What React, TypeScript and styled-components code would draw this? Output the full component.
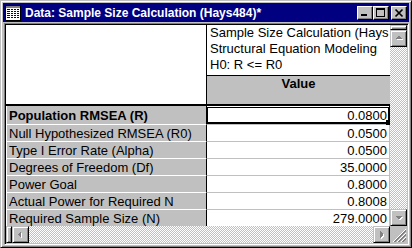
import * as React from 'react';
import styled, { createGlobalStyle } from 'styled-components';

const GlobalStyle = createGlobalStyle`
	html, body {
		margin: 0;
		padding: 0;
		background: #c0c0c0;
	}
	body {
		font-family: 'Liberation Sans', Arial, sans-serif;
	}
`;

const Window = styled.div`
	width: 412px;
	height: 248px;
	box-sizing: border-box;
	background: #c0c0c0;
	border: 1px solid;
	border-color: #c0c0c0 #000 #000 #c0c0c0;
	box-shadow: inset 1px 1px 0 #fff, inset -1px -1px 0 #808080;
	padding: 2px;
	display: flex;
	flex-direction: column;
`;

const TitleBar = styled.div`
	height: 19px;
	flex: none;
	background: #000080;
	display: flex;
	align-items: center;
	padding: 0 2px;
	box-sizing: border-box;
`;

const TitleText = styled.div`
	flex: 1;
	margin-left: 4px;
	color: #fff;
	font-weight: bold;
	font-size: 12px;
	white-space: nowrap;
	overflow: hidden;
`;

const CaptionButton = styled.div<{ $gap?: number }>`
	width: 16px;
	height: 14px;
	box-sizing: border-box;
	background: #c0c0c0;
	border: 1px solid;
	border-color: #fff #000 #000 #fff;
	box-shadow: inset -1px -1px 0 #808080;
	margin-left: ${(p) => p.$gap ?? 0}px;
	display: flex;
	svg {
		display: block;
	}
`;

const Client = styled.div`
	flex: 1;
	margin: 1px 0 0 1px;
	border: 1px solid;
	border-color: #808080 #fff #fff #808080;
	padding: 1px;
	box-shadow: inset 1px 1px 0 #000, inset -1px -1px 0 #c0c0c0;
	display: grid;
	grid-template-columns: 1fr 17px;
	grid-template-rows: 1fr 17px;
	min-height: 0;
`;

const Table = styled.div`
	display: flex;
	flex-direction: column;
	overflow: hidden;
	background: #fff;
	font-size: 13px;
	color: #000;
`;

const HeaderRow = styled.div`
	display: grid;
	grid-template-columns: 200px 184px;
	height: 81px;
	flex: none;
`;

const Corner = styled.div`
	background: #fff;
	border-bottom: 2px solid #000;
`;

const ColumnHeader = styled.div`
	border-left: 1px solid #000;
	display: flex;
	flex-direction: column;
`;

const ColumnTitle = styled.div`
	height: 50px;
	border-bottom: 1px solid #000;
	padding-left: 3px;
	line-height: 16px;
	overflow: hidden;
	white-space: nowrap;
`;

const ColumnName = styled.div`
	flex: 1;
	background: #c0c0c0;
	border-bottom: 2px solid #000;
	font-weight: bold;
	text-align: center;
	line-height: 15px;
`;

const Row = styled.div<{ $height: number }>`
	display: grid;
	grid-template-columns: 200px 184px;
	height: ${(p) => p.$height}px;
	flex: none;
`;

const RowHeader = styled.div<{ $first?: boolean; $bold?: boolean }>`
	background: #c0c0c0;
	border-left: 1px solid #fff;
	border-top: ${(p) => (p.$first ? 'none' : '1px solid #fff')};
	padding-left: 2px;
	font-weight: ${(p) => (p.$bold ? 'bold' : 'normal')};
	display: flex;
	align-items: center;
	white-space: nowrap;
	overflow: hidden;
`;

const ValueCell = styled.div<{ $first?: boolean; $selected?: boolean }>`
	position: relative;
	background: #fff;
	border-left: 1px solid #000;
	border-right: 1px solid ${(p) => (p.$selected ? '#000' : '#c0c0c0')};
	border-top: ${(p) => (p.$first ? 'none' : '1px solid #c0c0c0')};
	padding-right: 2px;
	display: flex;
	align-items: center;
	justify-content: flex-end;
	white-space: nowrap;
`;

const Selection = styled.div`
	position: absolute;
	top: 1px;
	left: 0;
	right: 0;
	bottom: 0;
	border: 1px solid #000;
	border-bottom-width: 2px;
	pointer-events: none;
`;

const FillHandle = styled.div`
	position: absolute;
	right: -2px;
	bottom: -3px;
	width: 4px;
	height: 5px;
	background: #000;
	z-index: 1;
`;

const ScrollBar = styled.div<{ $vertical?: boolean }>`
	display: flex;
	flex-direction: ${(p) => (p.$vertical ? 'column' : 'row')};
	background: #c0c0c0;
`;

const Raised = styled.div<{ $w: number; $h: number }>`
	width: ${(p) => p.$w}px;
	height: ${(p) => p.$h}px;
	flex: none;
	box-sizing: border-box;
	background: #c0c0c0;
	border: 1px solid;
	border-color: #c0c0c0 #000 #000 #c0c0c0;
	box-shadow: inset 1px 1px 0 #fff, inset -1px -1px 0 #808080;
	display: flex;
	align-items: center;
	justify-content: center;
	svg {
		display: block;
	}
`;

const Track = styled.div`
	flex: 1;
	background-color: #c0c0c0;
	background-image: conic-gradient(#fff 25%, #c0c0c0 0 50%, #fff 0 75%, #c0c0c0 0);
	background-size: 2px 2px;
`;

const Grip = styled.div`
	background: #c0c0c0;
	svg {
		display: block;
	}
`;

type Dir = 'up' | 'down' | 'left' | 'right';

const arrowPoints: Record<Dir, string> = {
	up: '7,5 4,8 11,8 8,5',
	down: '4,6 11,6 8,9 7,9',
	left: '5,7 8,4 8,11 5,8',
	right: '6,4 9,7 9,8 6,11',
};

function Arrow({ dir }: { dir: Dir }) {
	const pts = arrowPoints[dir];
	return (
		<svg width="15" height="15" viewBox="0 0 15 15" shapeRendering="crispEdges">
			<polygon points={pts} fill="#fff" transform="translate(1 1)" />
			<polygon points={pts} fill="#808080" />
		</svg>
	);
}

function SheetIcon() {
	const rows = [0, 1, 2, 3, 4];
	const cols = [2, 6, 9, 12];
	return (
		<svg width="16" height="16" viewBox="0 0 16 16" shapeRendering="crispEdges">
			<rect x="0.5" y="0.5" width="15" height="15" fill="#fff" stroke="#000" />
			<rect x="1" y="1" width="14" height="2" fill="#808080" />
			{rows.map((r) =>
				cols.map((c) => (
					<rect key={`${r}-${c}`} x={c} y={4 + r * 2} width={c === 2 ? 3 : 2} height="1" fill="#000080" />
				)),
			)}
		</svg>
	);
}

const rows = [
	{ label: 'Population RMSEA (R)', value: '0.0800' },
	{ label: 'Null Hypothesized RMSEA (R0)', value: '0.0500' },
	{ label: 'Type I Error Rate (Alpha)', value: '0.0500' },
	{ label: 'Degrees of Freedom (Df)', value: '35.0000' },
	{ label: 'Power Goal', value: '0.8000' },
	{ label: 'Actual Power for Required N', value: '0.8008' },
	{ label: 'Required Sample Size (N)', value: '279.0000' },
];

export default function App() {
	return (
		<>
			<GlobalStyle />
			<Window>
				<TitleBar>
					<SheetIcon />
					<TitleText>Data: Sample Size Calculation (Hays484)*</TitleText>
					<CaptionButton>
						<svg width="14" height="12" viewBox="0 0 14 12" shapeRendering="crispEdges">
							<rect x="3" y="7" width="6" height="2" fill="#000" />
						</svg>
					</CaptionButton>
					<CaptionButton>
						<svg width="14" height="12" viewBox="0 0 14 12" shapeRendering="crispEdges">
							<rect x="2" y="1" width="9" height="2" fill="#000" />
							<rect x="2" y="1" width="1" height="9" fill="#000" />
							<rect x="10" y="1" width="1" height="9" fill="#000" />
							<rect x="2" y="9" width="9" height="1" fill="#000" />
						</svg>
					</CaptionButton>
					<CaptionButton $gap={2}>
						<svg width="14" height="12" viewBox="0 0 14 12">
							<path d="M3.5 2.5 L10.5 9.5 M10.5 2.5 L3.5 9.5" stroke="#000" strokeWidth="1.7" />
						</svg>
					</CaptionButton>
				</TitleBar>
				<Client>
					<Table>
						<HeaderRow>
							<Corner />
							<ColumnHeader>
								<ColumnTitle>
									Sample Size Calculation (Hays
									<br />
									Structural Equation Modeling
									<br />
									H0: R &lt;= R0
								</ColumnTitle>
								<ColumnName>Value</ColumnName>
							</ColumnHeader>
						</HeaderRow>
						{rows.map((row, i) => (
							<Row key={row.label} $height={i === 0 ? 18 : 17}>
								<RowHeader $first={i === 0} $bold={i === 0}>{row.label}</RowHeader>
								<ValueCell $first={i === 0} $selected={i === 0}>
									{row.value}
									{i === 0 && (
										<Selection>
											<FillHandle />
										</Selection>
									)}
								</ValueCell>
							</Row>
						))}
					</Table>
					<ScrollBar $vertical>
						<Raised $w={17} $h={5} />
						<Raised $w={17} $h={17}>
							<Arrow dir="up" />
						</Raised>
						<Track />
						<Raised $w={17} $h={17}>
							<Arrow dir="down" />
						</Raised>
					</ScrollBar>
					<ScrollBar>
						<Raised $w={6} $h={17} />
						<Raised $w={17} $h={17}>
							<Arrow dir="left" />
						</Raised>
						<Track />
						<Raised $w={17} $h={17}>
							<Arrow dir="right" />
						</Raised>
					</ScrollBar>
					<Grip>
						<svg width="17" height="17" viewBox="0 0 17 17">
							<path d="M16 3 L3 16 M16 7 L7 16 M16 11 L11 16" stroke="#fff" strokeWidth="1" />
							<path d="M16 4 L4 16 M16 5 L5 16 M16 8 L8 16 M16 9 L9 16 M16 12 L12 16 M16 13 L13 16" stroke="#808080" strokeWidth="1" />
						</svg>
					</Grip>
				</Client>
			</Window>
		</>
	);
}
